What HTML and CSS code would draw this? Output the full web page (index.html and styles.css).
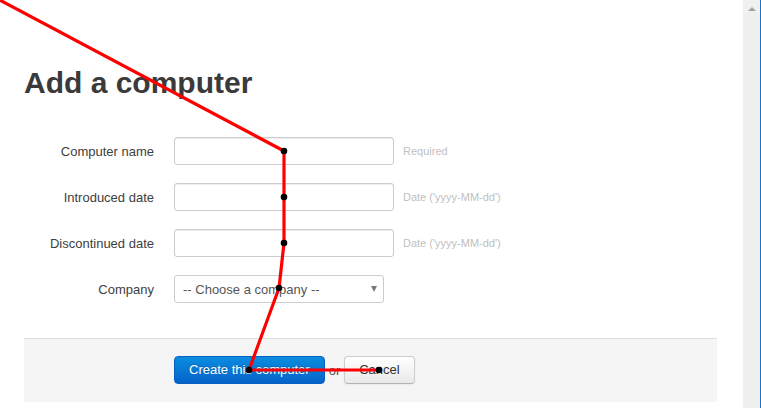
FILE: index.html
```html
<!DOCTYPE html>
<html lang="en">
<head>
<meta charset="utf-8">
<title>Add a computer</title>
<link rel="stylesheet" href="styles.css">
</head>
<body>
<div class="window">
  <main class="page">
    <h1 class="title">Add a computer</h1>
    <form class="form">
      <div class="fields">
        <div class="row">
          <label class="label" for="name">Computer name</label>
          <input class="text-input" id="name" type="text">
          <span class="help">Required</span>
        </div>
        <div class="row">
          <label class="label" for="introduced">Introduced date</label>
          <input class="text-input" id="introduced" type="text">
          <span class="help">Date ('yyyy-MM-dd')</span>
        </div>
        <div class="row">
          <label class="label" for="discontinued">Discontinued date</label>
          <input class="text-input" id="discontinued" type="text">
          <span class="help">Date ('yyyy-MM-dd')</span>
        </div>
        <div class="row">
          <label class="label" for="company">Company</label>
          <div class="select-wrap">
            <select class="select" id="company">
              <option>-- Choose a company --</option>
            </select>
          </div>
        </div>
      </div>
      <div class="actions">
        <button class="btn btn-primary" type="button">Create this computer</button>
        <span class="or">or</span>
        <button class="btn btn-default" type="button">Cancel</button>
      </div>
    </form>
  </main>
  <div class="scrollbar"><span class="scroll-up"></span></div>
  <div class="frame-edge"></div>
</div>
<svg class="trail" width="761" height="408" viewBox="0 0 761 408" aria-hidden="true">
  <polyline points="-6,-3 284,151 284,197 284,243 279,288 249,370 379,370" fill="none" stroke="#ff0000" stroke-width="3.2" stroke-linejoin="round"/>
  <circle cx="284" cy="151" r="3.3" fill="#000"/>
  <circle cx="284" cy="197" r="3.3" fill="#000"/>
  <circle cx="284" cy="243" r="3.3" fill="#000"/>
  <circle cx="279" cy="288" r="3.3" fill="#000"/>
  <circle cx="249" cy="370" r="3.3" fill="#000"/>
  <circle cx="379" cy="370" r="3.3" fill="#000"/>
</svg>
</body>
</html>
```
FILE: styles.css
```css
* { box-sizing: border-box; }

html, body {
  margin: 0;
  padding: 0;
  width: 761px;
  height: 408px;
  overflow: hidden;
  background: #fff;
  font-family: "Liberation Sans", Arial, Helvetica, sans-serif;
  font-size: 13px;
  color: #404040;
}

.window {
  display: flex;
  width: 761px;
  height: 408px;
}

.page {
  flex: 1;
  padding: 0 26px 0 24px;
}

.title {
  margin: 65px 0 0;
  font-size: 30px;
  line-height: 36px;
  font-weight: bold;
  color: #3a3a3a;
}

.form {
  margin: 36px 0 0;
}

.fields {
  display: flex;
  flex-direction: column;
  gap: 18px;
}

.row {
  display: flex;
  align-items: center;
  height: 28px;
}

.label {
  width: 130px;
  margin-right: 20px;
  text-align: right;
  color: #404040;
  font-size: 13px;
}

.text-input {
  width: 220px;
  height: 28px;
  margin: 0;
  padding: 4px 6px;
  border: 1px solid #ccc;
  border-radius: 3px;
  box-shadow: inset 0 1px 1px rgba(0, 0, 0, 0.075);
  background: #fff;
  font: 13px "Liberation Sans", Arial, sans-serif;
}

.help {
  margin-left: 9px;
  font-size: 11px;
  color: #bfbfbf;
}

.select-wrap {
  position: relative;
  width: 210px;
  height: 28px;
}

.select-wrap::after {
  content: "";
  position: absolute;
  right: 7px;
  top: 11px;
  border-left: 3.5px solid transparent;
  border-right: 3.5px solid transparent;
  border-top: 6px solid #777;
}

.select {
  -webkit-appearance: none;
  appearance: none;
  width: 210px;
  height: 28px;
  margin: 0;
  padding: 0 20px 0 8px;
  border: 1px solid #ccc;
  border-radius: 3px;
  background: #fff;
  color: #555;
  font: 13px "Liberation Sans", Arial, sans-serif;
}

.actions {
  display: flex;
  align-items: center;
  gap: 3px;
  margin-top: 35px;
  padding: 17px 0 18px 150px;
  background: #f5f5f5;
  border-top: 1px solid #ddd;
}

.btn {
  height: 28px;
  margin: 0;
  padding: 0 14px;
  border-radius: 4px;
  font: 13px "Liberation Sans", Arial, sans-serif;
  line-height: 26px;
  cursor: pointer;
}

.btn-primary {
  color: #fff;
  border: 1px solid #0760c0;
  background-image: linear-gradient(to bottom, #0a8de0, #0563c9);
  text-shadow: 0 -1px 0 rgba(0, 0, 0, 0.2);
}

.btn-default {
  color: #333;
  border: 1px solid #ccc;
  border-bottom-color: #b3b3b3;
  background-image: linear-gradient(to bottom, #ffffff, #e9e9e9);
  box-shadow: inset 0 1px 0 rgba(255, 255, 255, 0.2), 0 1px 2px rgba(0, 0, 0, 0.05);
}

.or {
  margin: 0 1px 0 1px;
  color: #555;
  font-size: 13px;
}

.scrollbar {
  width: 17px;
  height: 408px;
  background: #f0f0f0;
  display: flex;
  justify-content: center;
  padding-top: 7px;
}

.scroll-up {
  width: 0;
  height: 0;
  border-left: 4px solid transparent;
  border-right: 4px solid transparent;
  border-bottom: 4px solid #a3a3a3;
}

.frame-edge {
  width: 1px;
  height: 408px;
  background: #1a73c8;
}

.trail {
  position: absolute;
  left: 0;
  top: 0;
  pointer-events: none;
}
```
